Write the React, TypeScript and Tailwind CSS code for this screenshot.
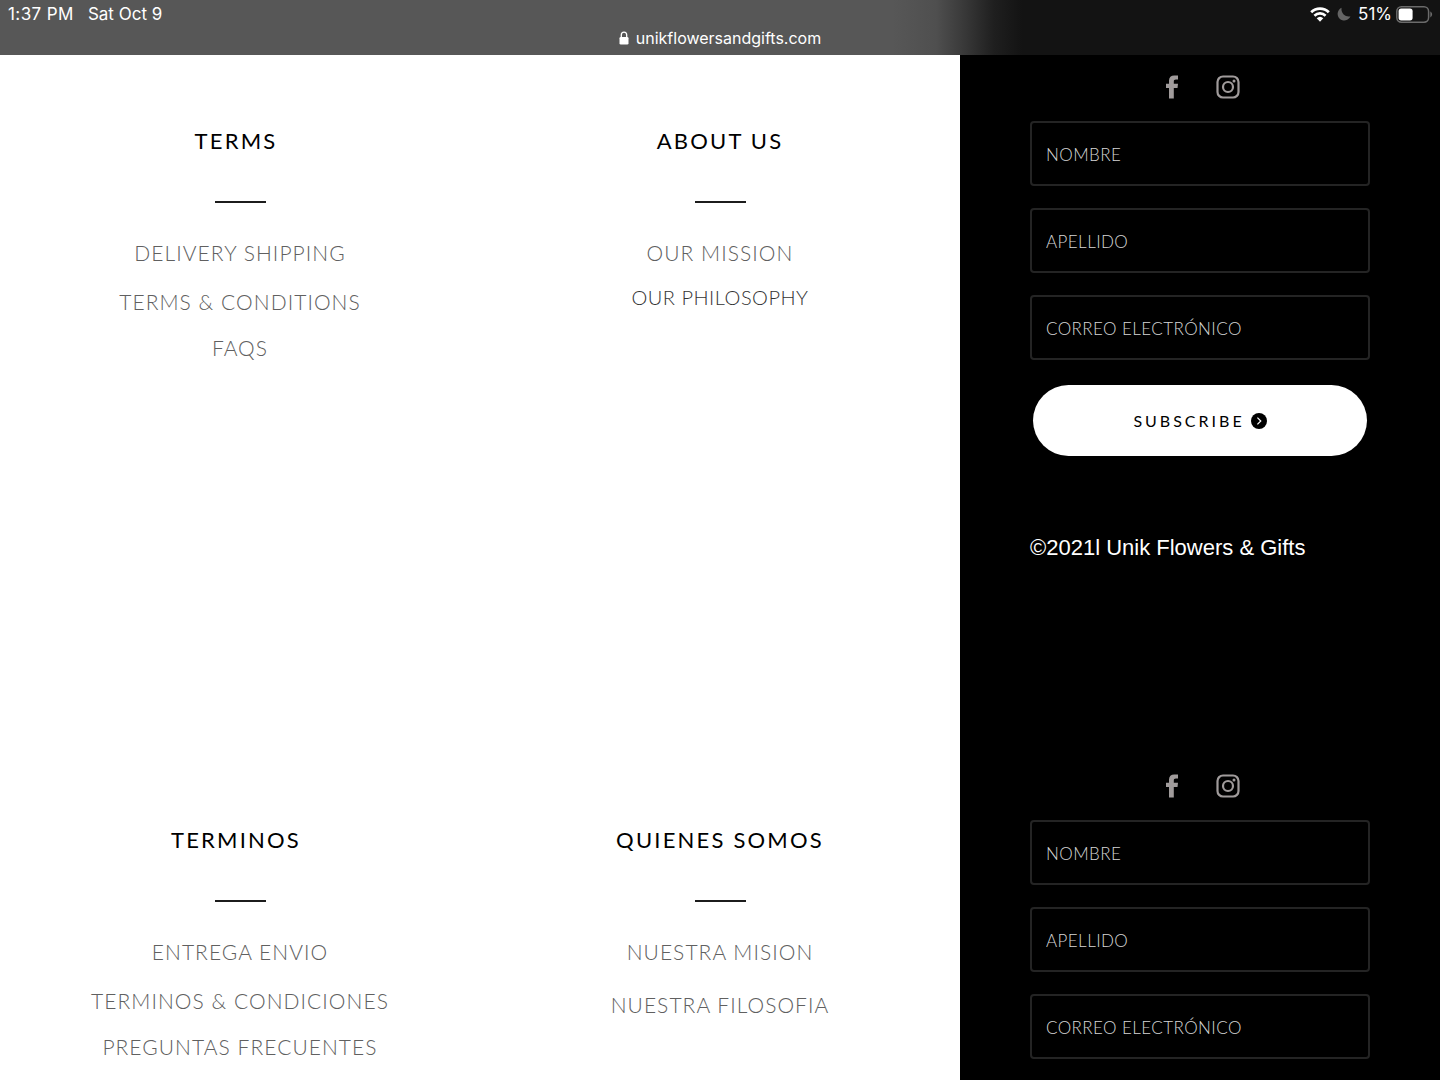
import clsx from 'clsx';

interface MenuItem {
  label: string;
  className?: string;
}

interface MenuProps {
  title: string;
  titleClassName?: string;
  items: MenuItem[];
}

interface SignupFormProps {
  id: string;
  children?: React.ReactNode;
}

const FIELDS = [
  { name: 'nombre', label: 'NOMBRE', type: 'text' },
  { name: 'apellido', label: 'APELLIDO', type: 'text' },
  { name: 'correo', label: 'CORREO ELECTRÓNICO', type: 'email' },
];

function WifiIcon() {
  return (
    <svg width="20" height="15" viewBox="0 0 20 15" fill="none" aria-hidden="true">
      <path d="M1.2 5.2a12.6 12.6 0 0 1 17.6 0" stroke="#fff" strokeWidth="2.8" />
      <path d="M4.4 8.7a8 8 0 0 1 11.2 0" stroke="#fff" strokeWidth="2.6" />
      <path d="M10 14.8 6.7 11.3a4.8 4.8 0 0 1 6.6 0Z" fill="#fff" />
    </svg>
  );
}

function MoonIcon() {
  return (
    <svg width="14" height="14" viewBox="0 0 14 14" aria-hidden="true">
      <path d="M4.6 0.8A6.6 6.6 0 1 0 13.4 9.2C8.6 10.4 3.6 6.2 4.6 0.8Z" fill="#646464" />
    </svg>
  );
}

function BatteryIcon() {
  return (
    <svg width="37" height="17" viewBox="0 0 37 17" aria-hidden="true">
      <rect x="0.8" y="0.8" width="31.8" height="15.4" rx="4.6" fill="none" stroke="#6b6b6b" strokeWidth="1.5" />
      <rect x="2.6" y="2.6" width="14" height="11.8" rx="2.6" fill="#fff" />
      <path d="M34.3 5.6c2.4 1 2.4 4.8 0 5.8Z" fill="#6b6b6b" />
    </svg>
  );
}

function LockIcon() {
  return (
    <svg width="10" height="14" viewBox="0 0 10 14" aria-hidden="true">
      <path d="M2.3 6.5V4a2.7 2.9 0 0 1 5.4 0v2.5" fill="none" stroke="#fff" strokeWidth="1.3" />
      <rect x="0.5" y="6" width="9" height="7.5" rx="1.3" fill="#fff" />
    </svg>
  );
}

function FacebookIcon() {
  return (
    <svg width="24" height="24" viewBox="-6 0 24 24" fill="#a09b9b" aria-hidden="true">
      <path d="M3 23.5V13H0V8.800h3V5.600C3 2.300 5 .5 8.200.5H12V4.500H10c-1.600 0-2.200.7-2.200 1.900v2.400H12L11.500 13H7.800v10.500Z" />
    </svg>
  );
}

function InstagramIcon() {
  return (
    <svg width="24" height="24" viewBox="0 0 24 24" fill="none" stroke="#a09b9b" aria-hidden="true">
      <rect x="1.5" y="1.5" width="21" height="21" rx="5.5" strokeWidth="2.2" />
      <circle cx="12" cy="12" r="5" strokeWidth="2.2" />
      <circle cx="18" cy="6" r="1.5" fill="#a09b9b" stroke="none" />
    </svg>
  );
}

function ArrowBadge() {
  return (
    <svg width="16" height="16" viewBox="0 0 16 16" aria-hidden="true">
      <circle cx="8" cy="8" r="8" fill="#000" />
      <path d="m6.4 4.6 3.4 3.4-3.4 3.4" fill="none" stroke="#fff" strokeWidth="1.2" />
    </svg>
  );
}

function StatusBar() {
  return (
    <header className="bg-[linear-gradient(to_right,#575757_62%,#4f4f4f_65%,#383838_67%,#1f1f1f_69%,#131313_71%)] pb-[7px] font-[Inter,sans-serif] text-white">
      <div className="flex h-7 items-center justify-between pr-[7px] pl-2 text-[17px]">
        <div className="flex gap-[14px] pt-px">
          <span className="tracking-wide">1:37 PM</span>
          <span>Sat Oct 9</span>
        </div>
        <div className="flex items-center">
          <WifiIcon />
          <span className="ml-[7px]">
            <MoonIcon />
          </span>
          <span className="mr-1 ml-[7px] pt-px">51%</span>
          <BatteryIcon />
        </div>
      </div>
      <div className="flex items-center justify-center gap-[7px] text-base leading-5">
        <LockIcon />
        <span>unikflowersandgifts.com</span>
      </div>
    </header>
  );
}

function Menu({ title, titleClassName, items }: MenuProps) {
  return (
    <nav aria-label={title} className="flex flex-col items-center pt-[70px]">
      <h2 className={clsx('text-[22px] leading-8 tracking-widest text-black', titleClassName)}>
        {title}
      </h2>
      <div className="mt-11 h-[2px] w-[51px] bg-[#1c1c1c]" />
      <ul className="mt-[34px] text-center text-[21px] leading-8 font-light tracking-wider text-[#606060]">
        {items.map(({ label, className }) => (
          <li key={label} className={className}>
            <a href="#">{label}</a>
          </li>
        ))}
      </ul>
    </nav>
  );
}

function SignupForm({ id, children }: SignupFormProps) {
  return (
    <aside className="bg-black px-[70px] pt-5">
      <div className="flex h-6 items-center justify-center gap-8">
        <a href="#" aria-label="Facebook">
          <FacebookIcon />
        </a>
        <a href="#" aria-label="Instagram">
          <InstagramIcon />
        </a>
      </div>
      <form className="mt-[22px] flex flex-col gap-[22px]">
        {FIELDS.map(({ name, label, type }) => (
          <input
            key={name}
            id={`${id}-${name}`}
            name={name}
            type={type}
            aria-label={label}
            placeholder={label}
            className="h-[65px] w-full rounded-[4px] border-2 border-[#242424] bg-black px-[14px] pt-[2px] text-[17px] font-light tracking-wide text-white placeholder:text-[#d6d6d6]"
          />
        ))}
        {children}
      </form>
    </aside>
  );
}

function App() {
  return (
    <div className="flex min-h-screen flex-col bg-white font-[Lato,sans-serif]">
      <StatusBar />
      <section className="grid grid-cols-3">
        <Menu
          title="TERMS"
          titleClassName="pr-2"
          items={[
            { label: 'DELIVERY SHIPPING' },
            { label: 'TERMS & CONDITIONS', className: 'mt-[17px]' },
            { label: 'FAQS', className: 'mt-[14px]' },
          ]}
        />
        <Menu
          title="ABOUT US"
          items={[
            { label: 'OUR MISSION' },
            { label: 'OUR PHILOSOPHY', className: 'mt-3 text-[20px] tracking-wide text-[#333333]' },
          ]}
        />
        <SignupForm id="en">
          <button
            type="button"
            className="mx-[3px] mt-[3px] flex h-[71px] items-center justify-center gap-[6px] rounded-full bg-white text-base tracking-[3px] text-black"
          >
            SUBSCRIBE
            <ArrowBadge />
          </button>
          <p className="mt-[54px] pb-[190px] font-['Liberation_Sans',sans-serif] text-[22px] leading-8 whitespace-nowrap text-white">
            ©2021l Unik Flowers &amp; Gifts
          </p>
        </SignupForm>
      </section>
      <section className="grid grow grid-cols-3">
        <Menu
          title="TERMINOS"
          titleClassName="pr-2"
          items={[
            { label: 'ENTREGA ENVIO' },
            { label: 'TERMINOS & CONDICIONES', className: 'mt-[17px]' },
            { label: 'PREGUNTAS FRECUENTES', className: 'mt-[14px]' },
          ]}
        />
        <Menu
          title="QUIENES SOMOS"
          items={[
            { label: 'NUESTRA MISION' },
            { label: 'NUESTRA FILOSOFIA', className: 'mt-[21px]' },
          ]}
        />
        <SignupForm id="es" />
      </section>
    </div>
  );
}

export default App;
